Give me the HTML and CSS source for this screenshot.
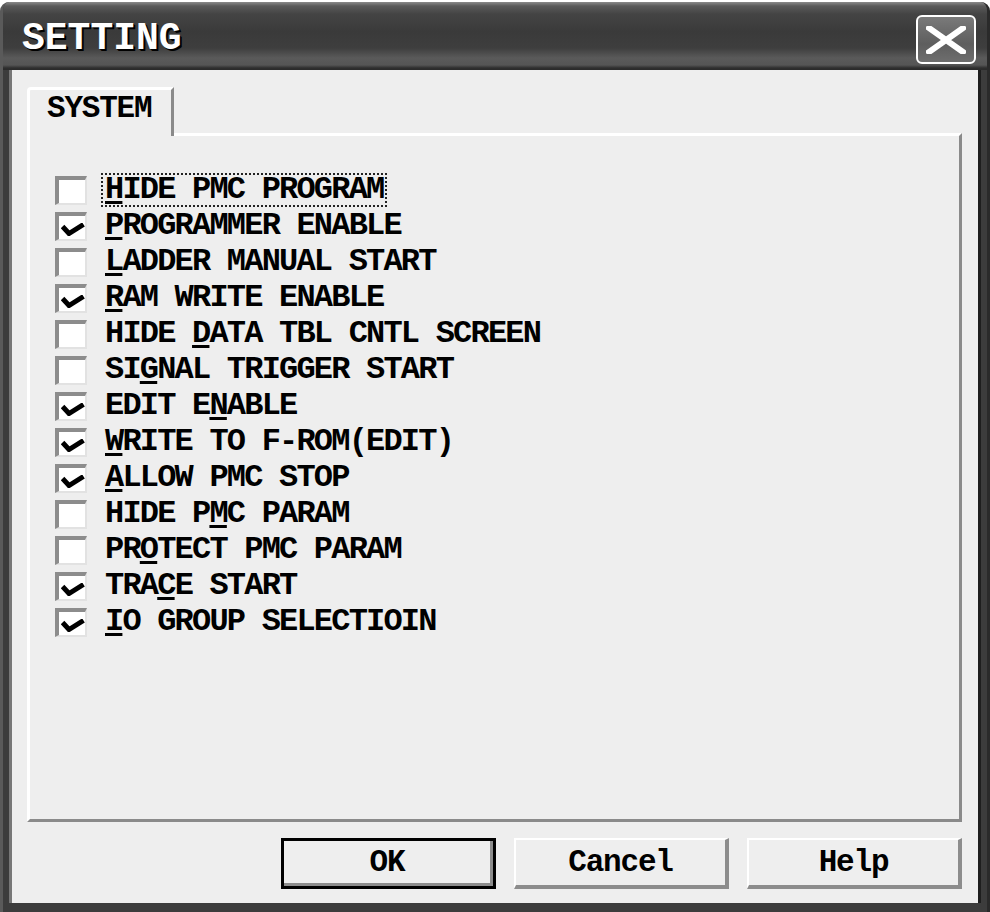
FILE: index.html
```html
<!DOCTYPE html>
<html>
<head>
<meta charset="utf-8">
<link rel="stylesheet" href="styles.css">
</head>
<body>
<div class="window">
  <div class="titlebar">
    <span class="title">SETTING</span>
    <div class="close">
      <svg width="40" height="28" viewBox="0 0 40 28"><path d="M3 2 L37 26 M37 2 L3 26" stroke="#fff" stroke-width="6" stroke-linecap="square"/></svg>
    </div>
  </div>
  <div class="client">
    <div class="tabs">
      <div class="tab">SYSTEM</div>
    </div>
    <div class="panel">
      <div class="row"><span class="cb"></span><span class="lbl focus"><u>H</u>IDE PMC PROGRAM</span></div>
      <div class="row"><span class="cb on"><svg viewBox="0 0 24 13" class="chk"><path d="M1.5 3.5 L8 10.5 L22.5 1.5" fill="none" stroke="#000" stroke-width="5"/></svg></span><span class="lbl"><u>P</u>ROGRAMMER ENABLE</span></div>
      <div class="row"><span class="cb"></span><span class="lbl"><u>L</u>ADDER MANUAL START</span></div>
      <div class="row"><span class="cb on"><svg viewBox="0 0 24 13" class="chk"><path d="M1.5 3.5 L8 10.5 L22.5 1.5" fill="none" stroke="#000" stroke-width="5"/></svg></span><span class="lbl"><u>R</u>AM WRITE ENABLE</span></div>
      <div class="row"><span class="cb"></span><span class="lbl">HIDE <u>D</u>ATA TBL CNTL SCREEN</span></div>
      <div class="row"><span class="cb"></span><span class="lbl">SI<u>G</u>NAL TRIGGER START</span></div>
      <div class="row"><span class="cb on"><svg viewBox="0 0 24 13" class="chk"><path d="M1.5 3.5 L8 10.5 L22.5 1.5" fill="none" stroke="#000" stroke-width="5"/></svg></span><span class="lbl">EDIT E<u>N</u>ABLE</span></div>
      <div class="row"><span class="cb on"><svg viewBox="0 0 24 13" class="chk"><path d="M1.5 3.5 L8 10.5 L22.5 1.5" fill="none" stroke="#000" stroke-width="5"/></svg></span><span class="lbl"><u>W</u>RITE TO F-ROM(EDIT)</span></div>
      <div class="row"><span class="cb on"><svg viewBox="0 0 24 13" class="chk"><path d="M1.5 3.5 L8 10.5 L22.5 1.5" fill="none" stroke="#000" stroke-width="5"/></svg></span><span class="lbl"><u>A</u>LLOW PMC STOP</span></div>
      <div class="row"><span class="cb"></span><span class="lbl">HIDE P<u>M</u>C PARAM</span></div>
      <div class="row"><span class="cb"></span><span class="lbl">PR<u>O</u>TECT PMC PARAM</span></div>
      <div class="row"><span class="cb on"><svg viewBox="0 0 24 13" class="chk"><path d="M1.5 3.5 L8 10.5 L22.5 1.5" fill="none" stroke="#000" stroke-width="5"/></svg></span><span class="lbl">TRA<u>C</u>E START</span></div>
      <div class="row"><span class="cb on"><svg viewBox="0 0 24 13" class="chk"><path d="M1.5 3.5 L8 10.5 L22.5 1.5" fill="none" stroke="#000" stroke-width="5"/></svg></span><span class="lbl"><u>I</u>O GROUP SELECTIOIN</span></div>
    </div>
    <div class="buttons">
      <div class="btn default"><span class="btn-in">OK</span></div>
      <div class="btn"><span class="btn-in">Cancel</span></div>
      <div class="btn"><span class="btn-in">Help</span></div>
    </div>
  </div>
</div>
</body>
</html>
```

FILE: styles.css
```css
* { box-sizing: border-box; }
html, body { margin: 0; padding: 0; background: #fff; }
body { width: 990px; height: 912px; overflow: hidden; font-family: "Liberation Mono", "Courier New", monospace; }

.window {
  width: 990px;
  margin-top: 2px;
  height: 910px;
  display: flex;
  flex-direction: column;
  background: #3c3c3c;
  border-radius: 9px 9px 0 0;
  border-left: 3px solid #5a5a5a;
  border-right: 3px solid #2a2a2a;
  overflow: hidden;
}

.titlebar {
  height: 68px;
  flex: none;
  display: flex;
  align-items: center;
  padding-left: 19px;
  padding-right: 11px;
  background: linear-gradient(#8a8a8a 0px, #5a5a5a 4px, #444 12px, #3a3a3a 30px, #3e3e3e 46px, #5a5a5a 56px, #555 63px, #2e2e2e 66px, #2a2a2a 68px);
}
.title {
  color: #fff;
  font-weight: bold;
  font-size: 38px;
  letter-spacing: 0px;
  text-shadow: 2px 2px 0 #000, 1px 1px 0 #000;
  padding-top: 4px;
  flex: 1;
}
.close {
  width: 60px;
  height: 49px;
  border: 2px solid #fff;
  border-radius: 6px;
  background: linear-gradient(#7a7a7a, #5e5e5e 60%, #6e6e6e);
  display: flex;
  align-items: center;
  justify-content: center;
  margin-top: 7px;
}

.client {
  flex: 1;
  margin: 0 6px 9px 6px;
  background: #eeeeee;
  display: flex;
  flex-direction: column;
  padding: 17px 16px 14px 15px;
  border-left: 3px solid #777;
  border-right: 3px solid #1e1e1e;
}

.tabs { display: flex; position: relative; z-index: 2; }
.tab {
  width: 147px;
  height: 49px;
  margin-bottom: -3px;
  background: #eeeeee;
  border-top: 3px solid #fff;
  border-left: 3px solid #fff;
  border-right: 3px solid #8a8a8a;
  border-radius: 4px 0 0 0;
  font-size: 31px;
  font-weight: bold;
  letter-spacing: -1.2px;
  line-height: 26px;
  padding: 6px 0 0 17px;
  color: #000;
}

.panel {
  height: 689px;
  border-top: 3px solid #fff;
  border-left: 3px solid #fff;
  border-right: 3px solid #8a8a8a;
  border-bottom: 3px solid #8a8a8a;
  padding: 36px 0 0 25px;
  display: flex;
  flex-direction: column;
}

.row {
  height: 36px;
  display: flex;
  align-items: center;
}
.cb {
  width: 32px;
  height: 29px;
  flex: none;
  background: #fff;
  border-top: 4px solid #8c8c8c;
  border-left: 4px solid #8c8c8c;
  border-right: 2px solid #e2e2e2;
  border-bottom: 2px solid #e2e2e2;
  position: relative;
}
.chk {
  position: absolute;
  left: 2px;
  top: 7px;
  width: 24px;
  height: 13px;
}
.lbl {
  margin-left: 14px;
  font-weight: bold;
  font-size: 32px;
  letter-spacing: -1.8px;
  line-height: 30px;
  color: #000;
  padding: 0 2px;
  border: 2px dotted transparent;
}
.lbl.focus { border-color: #222; }
u { text-decoration-thickness: 3px; text-underline-offset: 3px; }

.buttons {
  display: flex;
  justify-content: flex-end;
  gap: 18px;
  margin-top: 16px;
}
.btn {
  width: 215px;
  height: 51px;
  background: #eeeeee;
  border-top: 2px solid #fff;
  border-left: 2px solid #fff;
  border-right: 4px solid #8c8c8c;
  border-bottom: 4px solid #8c8c8c;
  display: flex;
  align-items: center;
  justify-content: center;
}
.btn.default {
  border: 3px solid #000;
  display: block;
  padding: 0;
}
.btn.default .btn-in {
  display: flex;
  width: 100%;
  height: 100%;
  align-items: center;
  justify-content: center;
  border-right: 3px solid #8c8c8c;
  border-bottom: 3px solid #8c8c8c;
}
.btn-in {
  font-size: 31px;
  letter-spacing: -1.2px;
  color: #000;
  font-weight: bold;
}
```
